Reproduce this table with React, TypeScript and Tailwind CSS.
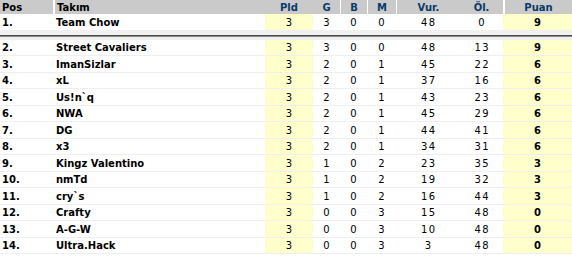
import React from 'react';

// Standings table
type Row = { pos: number; name: string; pld: number; g: number; b: number; m: number; vur: number; ol: number; puan: number };

const rows: Row[] = [
  { pos: 1, name: 'Team Chow', pld: 3, g: 3, b: 0, m: 0, vur: 48, ol: 0, puan: 9 },
  { pos: 2, name: 'Street Cavaliers', pld: 3, g: 3, b: 0, m: 0, vur: 48, ol: 13, puan: 9 },
  { pos: 3, name: 'ImanSizlar', pld: 3, g: 2, b: 0, m: 1, vur: 45, ol: 22, puan: 6 },
  { pos: 4, name: 'xL', pld: 3, g: 2, b: 0, m: 1, vur: 37, ol: 16, puan: 6 },
  { pos: 5, name: 'Us!n`q', pld: 3, g: 2, b: 0, m: 1, vur: 43, ol: 23, puan: 6 },
  { pos: 6, name: 'NWA', pld: 3, g: 2, b: 0, m: 1, vur: 45, ol: 29, puan: 6 },
  { pos: 7, name: 'DG', pld: 3, g: 2, b: 0, m: 1, vur: 44, ol: 41, puan: 6 },
  { pos: 8, name: 'x3', pld: 3, g: 2, b: 0, m: 1, vur: 34, ol: 31, puan: 6 },
  { pos: 9, name: 'Kingz Valentino', pld: 3, g: 1, b: 0, m: 2, vur: 23, ol: 35, puan: 3 },
  { pos: 10, name: 'nmTd', pld: 3, g: 1, b: 0, m: 2, vur: 19, ol: 32, puan: 3 },
  { pos: 11, name: 'cry`s', pld: 3, g: 1, b: 0, m: 2, vur: 16, ol: 44, puan: 3 },
  { pos: 12, name: 'Crafty', pld: 3, g: 0, b: 0, m: 3, vur: 15, ol: 48, puan: 0 },
  { pos: 13, name: 'A-G-W', pld: 3, g: 0, b: 0, m: 3, vur: 10, ol: 48, puan: 0 },
  { pos: 14, name: 'Ultra.Hack', pld: 3, g: 0, b: 0, m: 3, vur: 3, ol: 48, puan: 0 },
];

const cols = 'grid grid-cols-[53px_212px_48px_27px_27px_29px_64px_43px_69px]';
const num = 'flex items-center justify-center tracking-[1.5px] pl-[1.5px]';

function TeamRow({ r, tall }: { r: Row; tall: boolean }) {
  return (
    <div className={`${cols} ${tall ? 'h-[17px]' : 'h-[16px]'} border-b border-[#efefef] bg-white`}>
      <div className="flex items-center pl-[2px] font-bold">{r.pos}.</div>
      <div className="flex items-center pl-[3px] font-bold">{r.name}</div>
      <div className={`${num} bg-[#ffffcc]`}>{r.pld}</div>
      <div className={num}>{r.g}</div>
      <div className={num}>{r.b}</div>
      <div className={num}>{r.m}</div>
      <div className={num}>{r.vur}</div>
      <div className={num}>{r.ol}</div>
      <div className="flex items-center justify-center bg-[#ffffcc] font-bold">{r.puan}</div>
    </div>
  );
}

export default function App() {
  const [first, ...rest] = rows;
  return (
    <div className="w-[572px] h-[256px] bg-white text-[10px] text-black overflow-hidden" style={{ fontFamily: '"DejaVu Sans", Verdana, sans-serif' }}>
      {/* Header */}
      <div className={`${cols} h-[14px] bg-[#cacaca] font-bold`}>
        <div className="flex items-center pl-[2px]">Pos</div>
        <div className="flex items-center pl-[2px] border-l-2 border-white">Takım</div>
        <div className="flex items-center justify-center text-[#0b3a6b]">Pld</div>
        <div className="flex items-center justify-center text-[#0b3a6b]">G</div>
        <div className="flex items-center justify-center text-[#0b3a6b] border-l border-white">B</div>
        <div className="flex items-center justify-center text-[#0b3a6b] border-l border-white">M</div>
        <div className="flex items-center justify-center text-[#0b3a6b] border-l border-white">Vur.</div>
        <div className="flex items-center justify-center text-[#0b3a6b]">Öl.</div>
        <div className="flex items-center justify-center text-[#0b3a6b] border-l-2 border-white">Puan</div>
      </div>

      {/* Leader */}
      <div className={`${cols} h-[16px] bg-white`}>
        <div className="flex items-center pl-[2px] font-bold">{first.pos}.</div>
        <div className="flex items-center pl-[3px] font-bold">{first.name}</div>
        <div className={`${num} bg-[#ffffcc]`}>{first.pld}</div>
        <div className={num}>{first.g}</div>
        <div className={num}>{first.b}</div>
        <div className={num}>{first.m}</div>
        <div className={num}>{first.vur}</div>
        <div className={num}>{first.ol}</div>
        <div className="flex items-center justify-center bg-[#ffffcc] font-bold">{first.puan}</div>
      </div>

      {/* Divider */}
      <div className="h-[5px] bg-[#f0f0f0]" />
      <div className="h-px bg-[#4a4a4a]" />
      <div className="h-px bg-[#8a8a8a]" />
      <div className="h-[3px] bg-[#f0f0f0]" />

      {rest.map((r, i) => (
        <TeamRow key={r.pos} r={r} tall={i % 2 === 1} />
      ))}
    </div>
  );
}
